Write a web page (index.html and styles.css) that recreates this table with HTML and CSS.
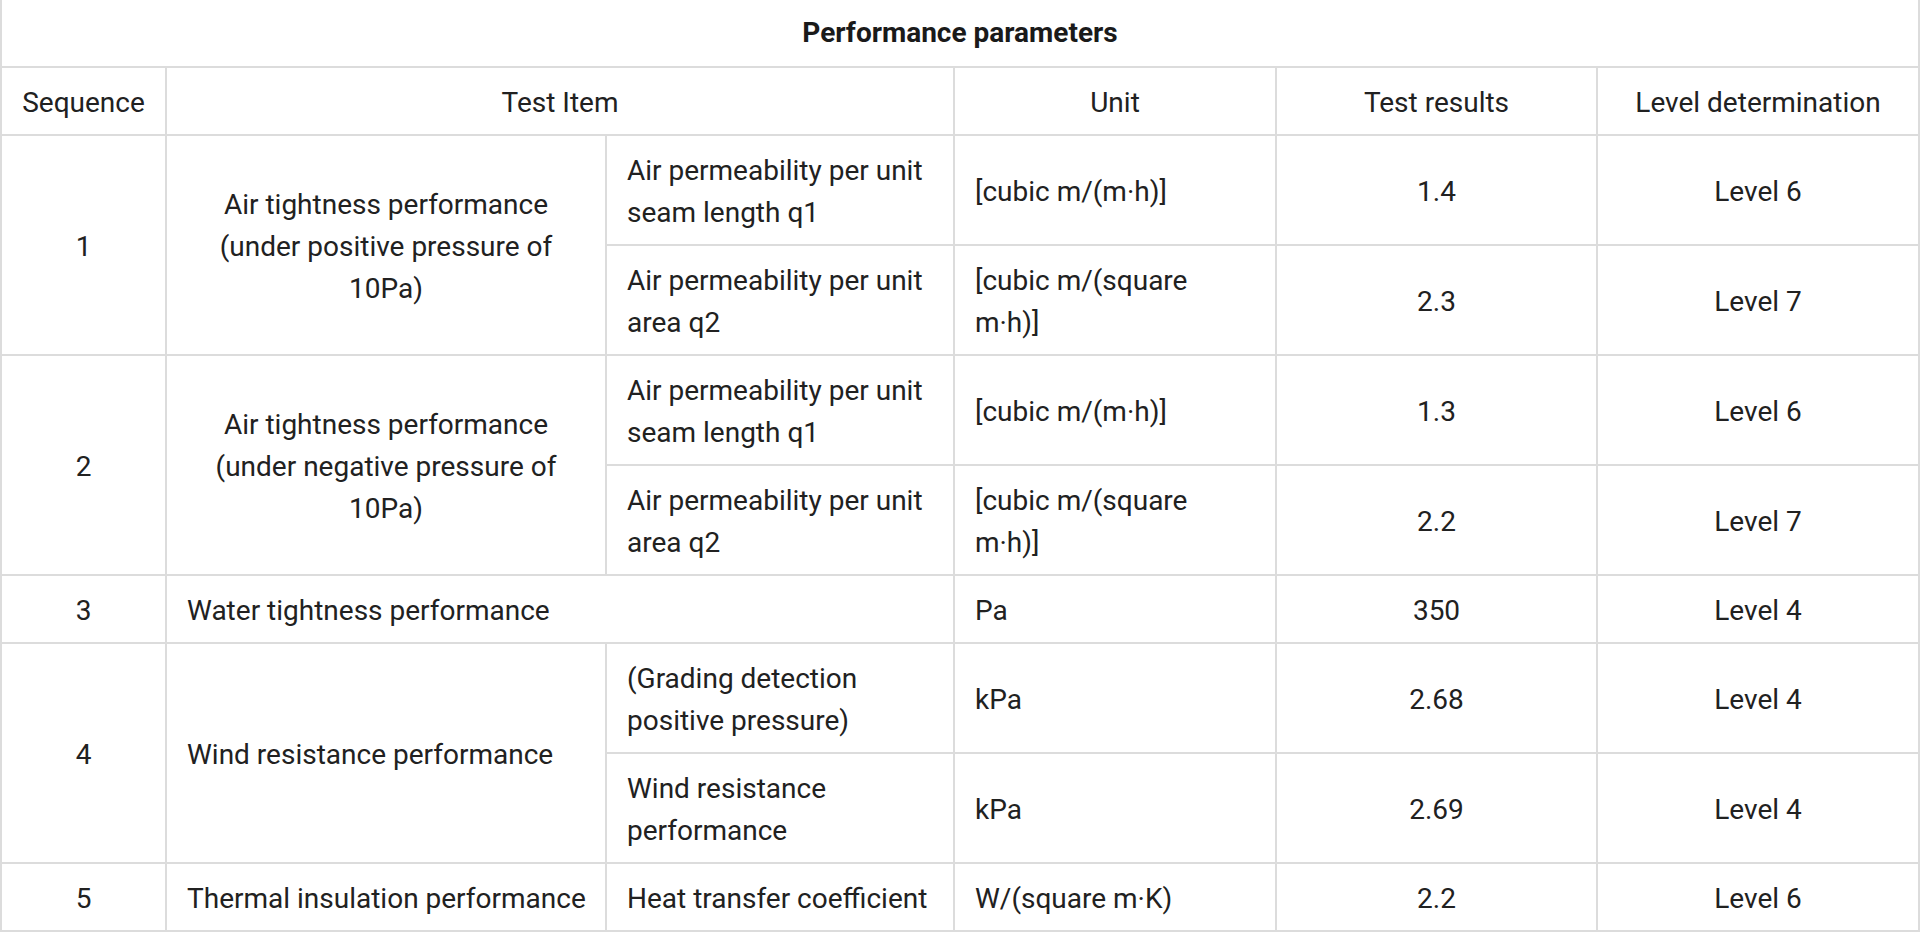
FILE: index.html
```html
<!DOCTYPE html>
<html lang="en">
<head>
<meta charset="utf-8">
<title>Performance parameters</title>
<link rel="stylesheet" href="styles.css">
</head>
<body>
<table class="perf">
  <colgroup>
    <col class="col-seq">
    <col class="col-item">
    <col class="col-sub">
    <col class="col-unit">
    <col class="col-res">
    <col class="col-lvl">
  </colgroup>
  <thead>
    <tr>
      <th colspan="6" class="title">Performance parameters</th>
    </tr>
    <tr class="head">
      <td class="c">Sequence</td>
      <td colspan="2" class="c">Test Item</td>
      <td class="c">Unit</td>
      <td class="c">Test results</td>
      <td class="c">Level determination</td>
    </tr>
  </thead>
  <tbody>
    <tr>
      <td rowspan="2" class="c">1</td>
      <td rowspan="2" class="c">Air tightness performance (under positive pressure of 10Pa)</td>
      <td>Air permeability per unit seam length q1</td>
      <td>[cubic m/(m·h)]</td>
      <td class="c">1.4</td>
      <td class="c">Level 6</td>
    </tr>
    <tr>
      <td>Air permeability per unit area q2</td>
      <td>[cubic m/(square m·h)]</td>
      <td class="c">2.3</td>
      <td class="c">Level 7</td>
    </tr>
    <tr>
      <td rowspan="2" class="c">2</td>
      <td rowspan="2" class="c">Air tightness performance (under negative pressure of 10Pa)</td>
      <td>Air permeability per unit seam length q1</td>
      <td>[cubic m/(m·h)]</td>
      <td class="c">1.3</td>
      <td class="c">Level 6</td>
    </tr>
    <tr>
      <td>Air permeability per unit area q2</td>
      <td>[cubic m/(square m·h)]</td>
      <td class="c">2.2</td>
      <td class="c">Level 7</td>
    </tr>
    <tr>
      <td class="c">3</td>
      <td colspan="2">Water tightness performance</td>
      <td>Pa</td>
      <td class="c">350</td>
      <td class="c">Level 4</td>
    </tr>
    <tr>
      <td rowspan="2" class="c">4</td>
      <td rowspan="2">Wind resistance performance</td>
      <td>(Grading detection positive pressure)</td>
      <td>kPa</td>
      <td class="c">2.68</td>
      <td class="c">Level 4</td>
    </tr>
    <tr>
      <td>Wind resistance performance</td>
      <td>kPa</td>
      <td class="c">2.69</td>
      <td class="c">Level 4</td>
    </tr>
    <tr>
      <td class="c">5</td>
      <td class="nw">Thermal insulation performance</td>
      <td class="nw">Heat transfer coefficient</td>
      <td>W/(square m·K)</td>
      <td class="c">2.2</td>
      <td class="c">Level 6</td>
    </tr>
  </tbody>
</table>
</body>
</html>
```
FILE: styles.css
```css
html, body {
  margin: 0;
  padding: 0;
  background: #ffffff;
}

body {
  font-family: Roboto, "Liberation Sans", Arial, sans-serif;
  color: #212121;
}

.perf {
  width: 1918px;
  table-layout: fixed;
  border-collapse: collapse;
  font-size: 28px;
  line-height: 42px;
}

.col-seq { width: 165px; }
.col-item { width: 440px; }
.col-sub { width: 348px; }
.col-unit { width: 322px; }
.col-res { width: 321px; }
.col-lvl { width: 322px; }

.perf th,
.perf td {
  border: 2px solid #dcdcdc;
  padding: 14px 20px 10px;
  vertical-align: middle;
  text-align: left;
  font-weight: 400;
}

.perf th.title {
  border-top: none;
  padding: 12px 20px;
  text-align: center;
  font-weight: 700;
  font-size: 28px;
  color: #1a1a1a;
}

.perf .c {
  text-align: center;
}

.perf .nw {
  white-space: nowrap;
}
```
